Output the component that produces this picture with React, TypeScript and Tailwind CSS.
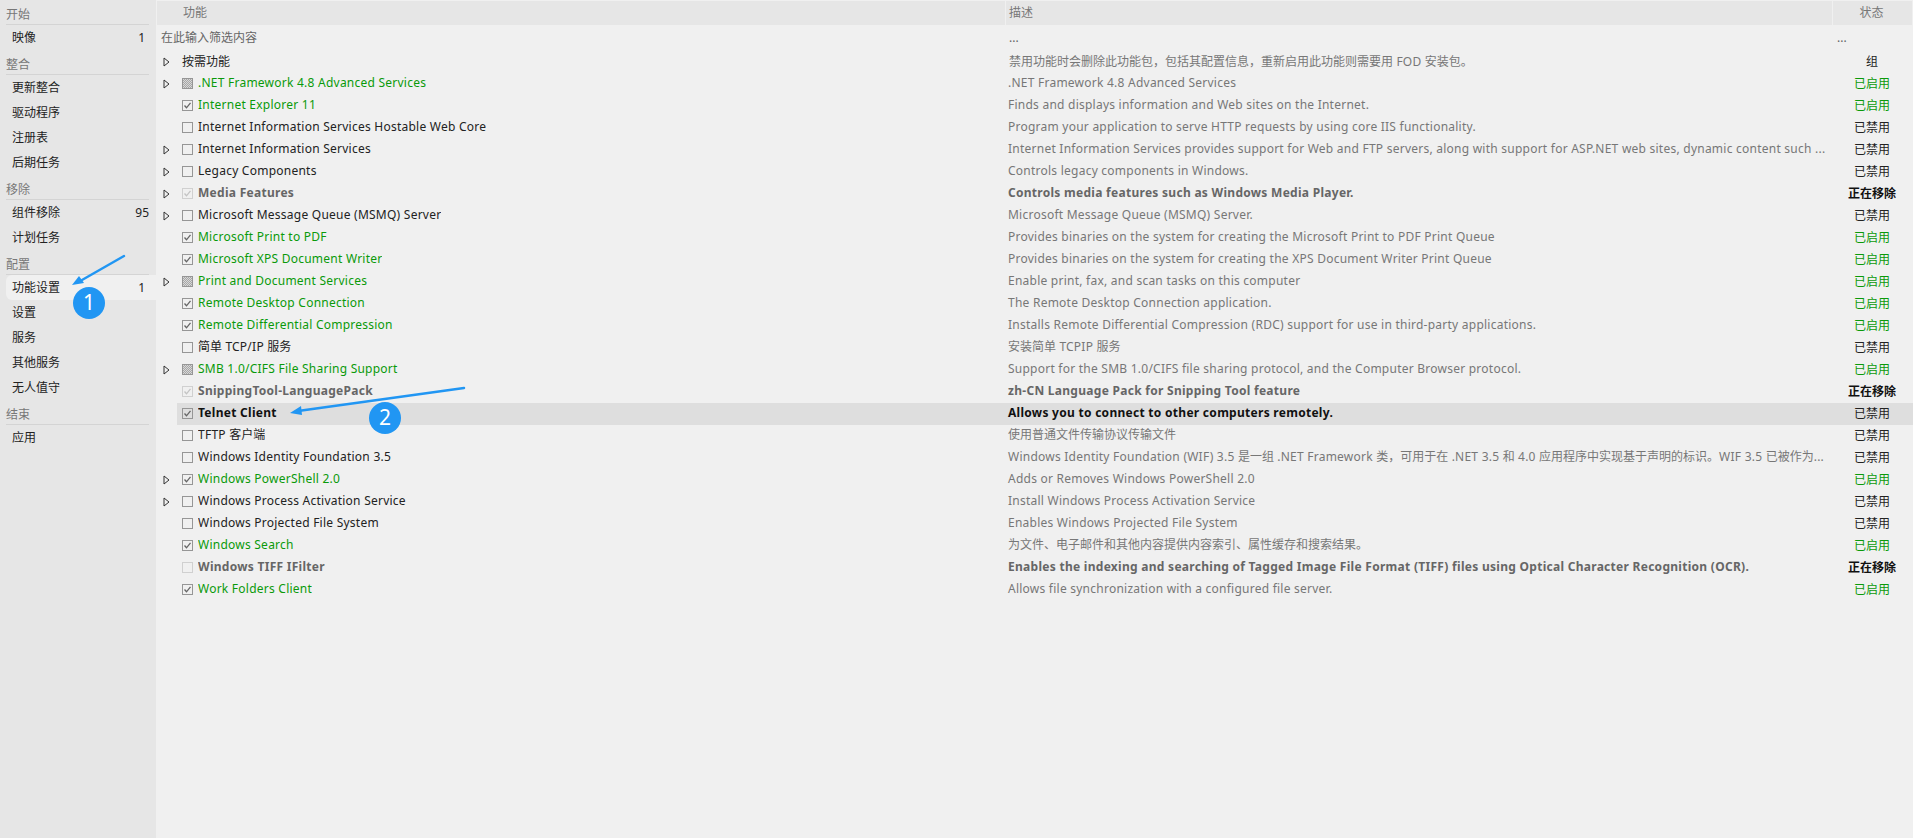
const FONT = "font-['Noto_Sans','Noto_Sans_CJK_SC',sans-serif]";

type Box = "none" | "on" | "mixed" | "dimOn" | "dimOff";
type Row = {
  name: string;
  desc: string;
  status: string;
  box: Box;
  tree?: boolean;
  tone?: "green" | "pending" | "active";
};

const ENABLED = "已启用";
const DISABLED = "已禁用";
const REMOVING = "正在移除";

const ROWS: Row[] = [
  { name: ".NET Framework 4.8 Advanced Services", desc: ".NET Framework 4.8 Advanced Services", status: ENABLED, box: "mixed", tree: true, tone: "green" },
  { name: "Internet Explorer 11", desc: "Finds and displays information and Web sites on the Internet.", status: ENABLED, box: "on", tone: "green" },
  { name: "Internet Information Services Hostable Web Core", desc: "Program your application to serve HTTP requests by using core IIS functionality.", status: DISABLED, box: "none" },
  { name: "Internet Information Services", desc: "Internet Information Services provides support for Web and FTP servers, along with support for ASP.NET web sites, dynamic content such ...", status: DISABLED, box: "none", tree: true },
  { name: "Legacy Components", desc: "Controls legacy components in Windows.", status: DISABLED, box: "none", tree: true },
  { name: "Media Features", desc: "Controls media features such as Windows Media Player.", status: REMOVING, box: "dimOn", tree: true, tone: "pending" },
  { name: "Microsoft Message Queue (MSMQ) Server", desc: "Microsoft Message Queue (MSMQ) Server.", status: DISABLED, box: "none", tree: true },
  { name: "Microsoft Print to PDF", desc: "Provides binaries on the system for creating the Microsoft Print to PDF Print Queue", status: ENABLED, box: "on", tone: "green" },
  { name: "Microsoft XPS Document Writer", desc: "Provides binaries on the system for creating the XPS Document Writer Print Queue", status: ENABLED, box: "on", tone: "green" },
  { name: "Print and Document Services", desc: "Enable print, fax, and scan tasks on this computer", status: ENABLED, box: "mixed", tree: true, tone: "green" },
  { name: "Remote Desktop Connection", desc: "The Remote Desktop Connection application.", status: ENABLED, box: "on", tone: "green" },
  { name: "Remote Differential Compression", desc: "Installs Remote Differential Compression (RDC) support for use in third-party applications.", status: ENABLED, box: "on", tone: "green" },
  { name: "简单 TCP/IP 服务", desc: "安装简单 TCPIP 服务", status: DISABLED, box: "none" },
  { name: "SMB 1.0/CIFS File Sharing Support", desc: "Support for the SMB 1.0/CIFS file sharing protocol, and the Computer Browser protocol.", status: ENABLED, box: "mixed", tree: true, tone: "green" },
  { name: "SnippingTool-LanguagePack", desc: "zh-CN Language Pack for Snipping Tool feature", status: REMOVING, box: "dimOn", tone: "pending" },
  { name: "Telnet Client", desc: "Allows you to connect to other computers remotely.", status: DISABLED, box: "on", tone: "active" },
  { name: "TFTP 客户端", desc: "使用普通文件传输协议传输文件", status: DISABLED, box: "none" },
  { name: "Windows Identity Foundation 3.5", desc: "Windows Identity Foundation (WIF) 3.5 是一组 .NET Framework 类，可用于在 .NET 3.5 和 4.0 应用程序中实现基于声明的标识。WIF 3.5 已被作为...", status: DISABLED, box: "none" },
  { name: "Windows PowerShell 2.0", desc: "Adds or Removes Windows PowerShell 2.0", status: ENABLED, box: "on", tree: true, tone: "green" },
  { name: "Windows Process Activation Service", desc: "Install Windows Process Activation Service", status: DISABLED, box: "none", tree: true },
  { name: "Windows Projected File System", desc: "Enables Windows Projected File System", status: DISABLED, box: "none" },
  { name: "Windows Search", desc: "为文件、电子邮件和其他内容提供内容索引、属性缓存和搜索结果。", status: ENABLED, box: "on", tone: "green" },
  { name: "Windows TIFF IFilter", desc: "Enables the indexing and searching of Tagged Image File Format (TIFF) files using Optical Character Recognition (OCR).", status: REMOVING, box: "dimOff", tone: "pending" },
  { name: "Work Folders Client", desc: "Allows file synchronization with a configured file server.", status: ENABLED, box: "on", tone: "green" },
];

const NAV = [
  { title: "开始", items: [{ label: "映像", count: "1" }] },
  { title: "整合", items: [{ label: "更新整合" }, { label: "驱动程序" }, { label: "注册表" }, { label: "后期任务" }] },
  { title: "移除", items: [{ label: "组件移除", count: "95" }, { label: "计划任务" }] },
  { title: "配置", items: [{ label: "功能设置", count: "1", active: true }, { label: "设置" }, { label: "服务" }, { label: "其他服务" }, { label: "无人值守" }] },
  { title: "结束", items: [{ label: "应用" }] },
];

// latin runs sit a little wider in the original font, CJK runs keep their 12px cell
function Mixed({ text, bold }: { text: string; bold?: boolean }) {
  const parts = text.split(/([\u3000-\u9fff\uff00-\uffef]+)/).filter(Boolean);
  return (
    <>
      {parts.map((part, i) =>
        /[\u3000-\u9fff\uff00-\uffef]/.test(part) ? (
          <span key={i}>{part}</span>
        ) : (
          <span key={i} className={bold ? "tracking-[0.28px]" : "tracking-[0.24px]"}>{part}</span>
        ),
      )}
    </>
  );
}

function Triangle() {
  return (
    <svg width="7" height="10" viewBox="0 0 7 10" className="block">
      <path d="M1 1 L6 5 L1 9 Z" fill="none" stroke="#333" strokeWidth="1" />
    </svg>
  );
}

function Checkbox({ box }: { box: Box }) {
  const dim = box === "dimOn" || box === "dimOff";
  return (
    <span className={`w-[11px] h-[11px] shrink-0 border flex items-center justify-center ${dim ? "border-[#d0d0d0]" : "border-[#969696]"}`}>
      {box === "mixed" && (
        <span className="w-[9px] h-[9px] bg-[repeating-conic-gradient(#a6a6a6_0_25%,#d8d8d8_0_50%)] bg-[length:2px_2px]" />
      )}
      {(box === "on" || box === "dimOn") && (
        <svg width="9" height="9" viewBox="0 0 9 9" className="block">
          <path d="M1.5 4.5 L3.5 6.8 L7.5 1.8" fill="none" stroke={box === "on" ? "#666" : "#c4c4c4"} strokeWidth="1.3" />
        </svg>
      )}
    </span>
  );
}

function FeatureRow({ row }: { row: Row }) {
  const active = row.tone === "active";
  const pending = row.tone === "pending";
  const green = row.tone === "green";
  const bold = active || pending;
  const nameClass = active
    ? "text-[#111] font-bold"
    : pending
      ? "text-[#666] font-bold"
      : green
        ? "text-[#0a9a0a]"
        : "text-[#222]";
  const descClass = active ? "text-[#111] font-bold" : pending ? "text-[#666] font-bold" : "text-[#777]";
  const statusClass = green ? "text-[#0a9a0a]" : pending ? "text-[#111] font-bold" : "text-[#222]";
  return (
    <div className="flex h-[22px] items-center">
      <span className="w-[21px] shrink-0 pl-[7px]">{row.tree && <Triangle />}</span>
      <div className={`flex flex-1 min-w-0 h-full items-center pb-px ${active ? "bg-[#dedede]" : ""}`}>
        <div className="w-[830px] shrink-0 flex items-center pl-[5px] gap-[5px]">
          <Checkbox box={row.box} />
          <span className={`truncate pb-[2px] ${nameClass}`}><Mixed text={row.name} bold={bold} /></span>
        </div>
        <div className={`w-[826px] shrink-0 pl-px pb-[2px] whitespace-nowrap overflow-hidden ${descClass}`}><Mixed text={row.desc} bold={bold} /></div>
        <div className={`flex-1 pr-[2px] text-center ${statusClass}`}>{row.status}</div>
      </div>
    </div>
  );
}

export default function App() {
  return (
    <div className={`relative flex w-[1913px] h-[838px] overflow-hidden bg-[#f0f0f0] text-[12px] ${FONT}`}>
      <aside className="w-[156px] shrink-0 bg-[#e6e6e6] text-[#222]">
        {NAV.map((group) => (
          <div key={group.title}>
            <div className="h-[25px] ml-[6px] mr-[7px] pt-[6px] border-b-[1px] border-[#d4d4d4] flex items-center text-[#777]">{group.title}</div>
            {group.items.map((item) => (
              <div
                key={item.label}
                className={`h-[25px] ml-[6px] pl-[6px] pt-px flex items-center justify-between ${item.active ? "bg-[#f0f0f0] rounded-l-[6px]" : ""}`}
              >
                <span>{item.label}</span>
                {item.count && <span className={item.count === "95" ? "pr-[7px]" : "pr-[11px]"}>{item.count}</span>}
              </div>
            ))}
          </div>
        ))}
      </aside>

      <main className="flex-1 min-w-0 flex flex-col">
        <div className="flex h-[24px] mt-px text-[#777]">
          <div className="w-[848px] ml-px shrink-0 bg-[#e6e6e6] pl-[26px] flex items-center">功能</div>
          <div className="w-[826px] ml-px shrink-0 bg-[#e6e6e6] pl-[3px] flex items-center">描述</div>
          <div className="w-[79px] ml-px shrink-0 bg-[#e6e6e6] pr-[2px] flex items-center justify-center">状态</div>
        </div>
        <div className="flex h-[26px] items-center text-[#666]">
          <div className="w-[852px] shrink-0 pl-[5px]">在此输入筛选内容</div>
          <div className="w-[825px] shrink-0 pl-px">...</div>
          <div className="flex-1 pl-[4px]">...</div>
        </div>
        <div className="flex h-[22px] items-center text-[#222]">
          <span className="w-[25px] shrink-0 pl-[7px]"><Triangle /></span>
          <div className="w-[827px] shrink-0 pl-px">按需功能</div>
          <div className="w-[825px] shrink-0 pl-px text-[#777]"><Mixed text="禁用功能时会删除此功能包，包括其配置信息，重新启用此功能则需要用 FOD 安装包。" /></div>
          <div className="flex-1 pr-[2px] text-center">组</div>
        </div>
        {ROWS.map((row) => (
          <FeatureRow key={row.name} row={row} />
        ))}
      </main>

      {/* annotations drawn over the screenshot */}
      <svg className="absolute left-0 top-0 pointer-events-none" width="1913" height="838" viewBox="0 0 1913 838">
        <path d="M124 256 L82 280" stroke="#2196f3" strokeWidth="2.5" strokeLinecap="round" fill="none" />
        <path d="M72 285 L79 276 L84 283 Z" fill="#2196f3" />
        <path d="M464 388 L298 411" stroke="#2196f3" strokeWidth="2.5" strokeLinecap="round" fill="none" />
        <path d="M290 413 L301 406 L302 415 Z" fill="#2196f3" />
      </svg>
      <span className="absolute left-[73px] top-[287px] w-[32px] h-[32px] rounded-full bg-[#2196f3] text-white text-[21px] flex items-center justify-center">1</span>
      <span className="absolute left-[369px] top-[402px] w-[32px] h-[32px] rounded-full bg-[#2196f3] text-white text-[21px] flex items-center justify-center">2</span>
    </div>
  );
}
